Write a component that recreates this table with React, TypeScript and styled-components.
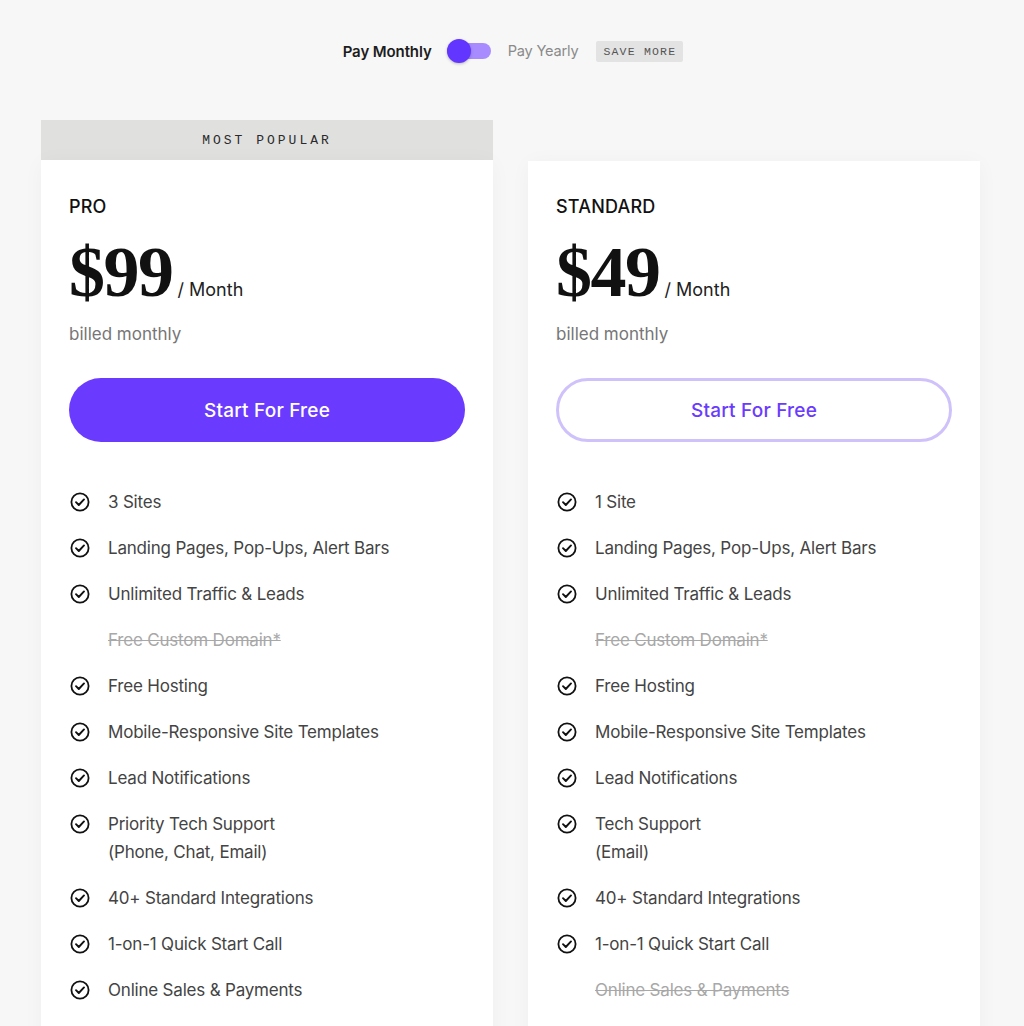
import React from "react";
import styled, { createGlobalStyle } from "styled-components";

const Global = createGlobalStyle`
  html, body { margin: 0; padding: 0; background: #f7f7f7; }
  body { font-family: Inter, "Noto Sans", Arial, sans-serif; -webkit-font-smoothing: antialiased; }
`;

const Page = styled.div`
  height: 1026px;
  overflow: hidden;
  background: #f7f7f7;
`;

const ToggleBar = styled.div`
  display: flex;
  align-items: center;
  justify-content: center;
  padding-top: 40px;
  height: 22px;
  margin-left: 2px;
`;

const Label = styled.span<{ $active?: boolean }>`
  font-size: ${(p) => (p.$active ? "15px" : "14.6px")};
  font-weight: ${(p) => (p.$active ? 600 : 400)};
  color: ${(p) => (p.$active ? "#1d1d1d" : "#8a8a8a")};
  letter-spacing: ${(p) => (p.$active ? "-0.1px" : "-0.2px")};
`;

const Switch = styled.div`
  position: relative;
  width: 44px;
  height: 16px;
  border-radius: 8px;
  background: #a88cff;
  margin: 0 17px 0 15px;
`;

const Knob = styled.div`
  position: absolute;
  left: 0;
  top: -4px;
  width: 24px;
  height: 24px;
  border-radius: 50%;
  background: #6236ff;
  box-shadow: 0 1px 3px rgba(0, 0, 0, 0.25);
`;

const SaveBadge = styled.span`
  margin-left: 18px;
  padding: 0 7px;
  height: 21px;
  display: inline-flex;
  align-items: center;
  background: #e3e3e3;
  border-radius: 2px;
  font-family: "Liberation Mono", "DejaVu Sans Mono", monospace;
  font-size: 11.5px;
  letter-spacing: 1.2px;
  color: #555;
`;

const Cards = styled.div`
  display: grid;
  grid-template-columns: 452px 452px;
  column-gap: 35px;
  padding: 58px 0 0 41px;
  align-items: start;
`;

const Column = styled.div<{ $offset?: boolean }>`
  display: flex;
  flex-direction: column;
  padding-top: ${(p) => (p.$offset ? "41px" : "0")};
`;

const Banner = styled.div`
  height: 40px;
  background: #e0e0df;
  display: flex;
  align-items: center;
  justify-content: center;
  font-family: "Liberation Mono", "DejaVu Sans Mono", monospace;
  font-size: 13px;
  letter-spacing: 3px;
  color: #2a2a2a;
  padding-top: 1px;
  box-sizing: border-box;
`;

const Card = styled.div<{ $offset?: boolean }>`
  background: #fff;
  padding: ${(p) => (p.$offset ? "32px" : "33px")} 28px 40px;
  box-shadow: 0 2px 20px rgba(0, 0, 0, 0.035);
  min-height: 900px;
`;

const PlanName = styled.div`
  font-size: 18px;
  line-height: 28px;
  font-weight: 500;
  color: #111;
  letter-spacing: 0.2px;
`;

const PriceRow = styled.div`
  display: flex;
  align-items: baseline;
  margin-top: 15px;
`;

const Price = styled.span`
  font-family: "Liberation Serif", "Times New Roman", serif;
  font-weight: 700;
  font-size: 72px;
  line-height: 1;
  letter-spacing: -1.5px;
  color: #111;
`;

const Per = styled.span`
  font-size: 18px;
  color: #222;
  margin-left: 5px;
`;

const Billed = styled.div`
  margin-top: 14px;
  font-size: 17px;
  line-height: 24px;
  color: #767676;
`;

const CTA = styled.button<{ $primary?: boolean }>`
  margin-top: 32px;
  width: 100%;
  height: 64px;
  border-radius: 32px;
  font-family: inherit;
  font-size: 19px;
  font-weight: 500;
  letter-spacing: 0.2px;
  cursor: pointer;
  background: ${(p) => (p.$primary ? "#6a3bff" : "#fff")};
  color: ${(p) => (p.$primary ? "#fff" : "#6a3bff")};
  border: ${(p) => (p.$primary ? "none" : "3px solid #cfc2fb")};
`;

const Features = styled.ul`
  list-style: none;
  margin: 46px 0 0;
  padding: 0;
  display: flex;
  flex-direction: column;
  gap: 18px;
`;

const Feature = styled.li<{ $off?: boolean }>`
  display: grid;
  grid-template-columns: 20px 1fr;
  column-gap: 18px;
  padding-left: 1px;
  font-size: 17px;
  line-height: 28px;
  letter-spacing: -0.2px;
  color: ${(p) => (p.$off ? "#a8a8a8" : "#444")};
  text-decoration: ${(p) => (p.$off ? "line-through" : "none")};
`;

const IconCell = styled.span`
  display: flex;
  align-items: flex-start;
  padding-top: 4px;
`;

const Check = () => (
  <svg width="20" height="20" viewBox="0 0 20 20" fill="none">
    <circle cx="10" cy="10" r="8.6" stroke="#111" strokeWidth="1.8" />
    <path d="M6 10.2l2.8 2.8 5.2-5.6" stroke="#111" strokeWidth="1.9" strokeLinecap="round" strokeLinejoin="round" />
  </svg>
);

type Item = { text: React.ReactNode; off?: boolean };

const pro: Item[] = [
  { text: "3 Sites" },
  { text: "Landing Pages, Pop-Ups, Alert Bars" },
  { text: "Unlimited Traffic & Leads" },
  { text: "Free Custom Domain*", off: true },
  { text: "Free Hosting" },
  { text: "Mobile-Responsive Site Templates" },
  { text: "Lead Notifications" },
  { text: <>Priority Tech Support<br />(Phone, Chat, Email)</> },
  { text: "40+ Standard Integrations" },
  { text: "1-on-1 Quick Start Call" },
  { text: "Online Sales & Payments" },
];

const standard: Item[] = [
  { text: "1 Site" },
  { text: "Landing Pages, Pop-Ups, Alert Bars" },
  { text: "Unlimited Traffic & Leads" },
  { text: "Free Custom Domain*", off: true },
  { text: "Free Hosting" },
  { text: "Mobile-Responsive Site Templates" },
  { text: "Lead Notifications" },
  { text: <>Tech Support<br />(Email)</> },
  { text: "40+ Standard Integrations" },
  { text: "1-on-1 Quick Start Call" },
  { text: "Online Sales & Payments", off: true },
];

const Plan = ({ name, price, primary, offset, items }: { name: string; price: string; primary?: boolean; offset?: boolean; items: Item[] }) => (
  <Card $offset={offset}>
    <PlanName>{name}</PlanName>
    <PriceRow>
      <Price>{price}</Price>
      <Per>/ Month</Per>
    </PriceRow>
    <Billed>billed monthly</Billed>
    <CTA $primary={primary}>Start For Free</CTA>
    <Features>
      {items.map((it, i) => (
        <Feature key={i} $off={it.off}>
          <IconCell>{!it.off && <Check />}</IconCell>
          <span>{it.text}</span>
        </Feature>
      ))}
    </Features>
  </Card>
);

export default function App() {
  return (
    <Page>
      <Global />
      <ToggleBar>
        <Label $active>Pay Monthly</Label>
        <Switch>
          <Knob />
        </Switch>
        <Label>Pay Yearly</Label>
        <SaveBadge>SAVE MORE</SaveBadge>
      </ToggleBar>
      <Cards>
        <Column>
          <Banner>MOST POPULAR</Banner>
          <Plan name="PRO" price="$99" primary items={pro} />
        </Column>
        <Column $offset>
          <Plan name="STANDARD" price="$49" offset items={standard} />
        </Column>
      </Cards>
    </Page>
  );
}
